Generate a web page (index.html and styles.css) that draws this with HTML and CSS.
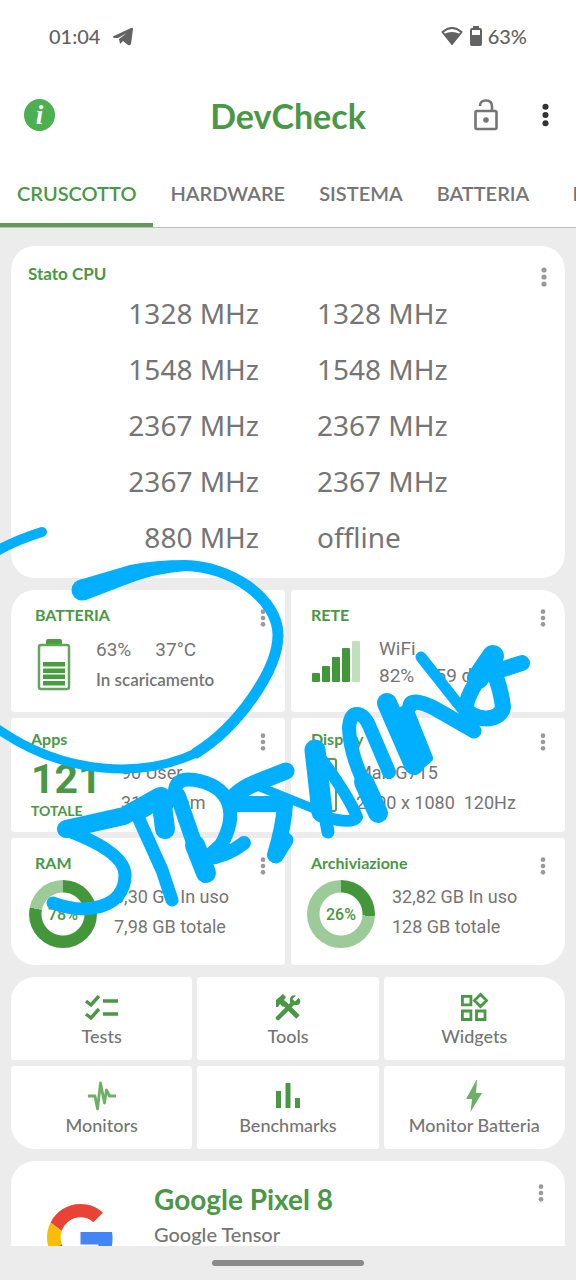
FILE: index.html
```html
<!DOCTYPE html>
<html lang="it">
<head>
  <meta charset="UTF-8" />
  <meta name="viewport" content="width=device-width, initial-scale=1.0"/>
  <title>DevCheck</title>
  <link rel="stylesheet" href="styles.css">
</head>
<body>
  <svg class="defs" aria-hidden="true">
    <symbol id="dots" viewBox="0 0 6 20">
      <circle cx="3" cy="3" r="2.6"/><circle cx="3" cy="10" r="2.6"/><circle cx="3" cy="17" r="2.6"/>
    </symbol>
  </svg>

  <div class="status-bar">
    <span>01:04</span>
    <svg class="telegram" width="20" height="19" viewBox="0 0 20 19"><path d="M1 9 18 1Q20 0 20 2L18 17Q17 19 15 18L10 14 7 17 6 12 14 6 5 11 1 11Q-1 10 1 9Z"/></svg>
    <span class="spacer"></span>
    <svg width="22" height="20" viewBox="0 0 22 20"><path d="M11 18 1.500 6Q11-2 20.500 6Z" fill="none" stroke="#626262" stroke-width="2" stroke-linejoin="round"/><path d="M11 19 3 8Q11 4 19 8Z"/></svg>
    <svg class="batt" width="12" height="20" viewBox="0 0 12 20"><path d="M3 2V0h6v2h1q2 0 2 2v14q0 2-2 2H2q-2 0-2-2V4q0-2 2-2Z"/><path d="M2 4h8v5H2Z" fill="#fff"/></svg>
    <span>63%</span>
  </div>

  <header class="app-bar">
    <button class="info" aria-label="Info">i</button>
    <h1>DevCheck</h1>
    <div class="actions">
      <button class="lock" aria-label="Sblocca">
        <svg width="24" height="32" viewBox="0 0 24 32" fill="none" stroke="#757575" stroke-width="2.6"><rect x="1.5" y="12" width="21" height="18" rx="1.5"/><path d="M6 7Q6 1.500 12 1.500T18 7.500V12"/><circle cx="12" cy="21" r="2.800" fill="#757575" stroke="none"/></svg>
      </button>
      <button class="more" aria-label="Altro"><svg width="7" height="24"><use href="#dots"/></svg></button>
    </div>
  </header>

  <nav class="tabs">
    <a href="#cruscotto" class="active">CRUSCOTTO</a>
    <a href="#hardware">HARDWARE</a>
    <a href="#sistema">SISTEMA</a>
    <a href="#batteria">BATTERIA</a>
    <a href="#rete">RETE</a>
  </nav>

  <main>
    <section class="card cpu">
      <div class="head">
        <h2>Stato CPU</h2>
        <button class="menu" aria-label="Menu CPU"><svg width="6" height="20"><use href="#dots"/></svg></button>
      </div>
      <table>
        <tr><td>1328 MHz</td><td>1328 MHz</td></tr>
        <tr><td>1548 MHz</td><td>1548 MHz</td></tr>
        <tr><td>2367 MHz</td><td>2367 MHz</td></tr>
        <tr><td>2367 MHz</td><td>2367 MHz</td></tr>
        <tr><td>880 MHz</td><td>offline</td></tr>
      </table>
    </section>

    <div class="tiles">
      <section class="tile wide-pad">
        <div class="head">
          <h2>BATTERIA</h2>
          <button class="menu" aria-label="Menu batteria"><svg width="6" height="18"><use href="#dots"/></svg></button>
        </div>
        <div class="body">
          <div class="icon batt-icon">
            <svg width="34" height="52" viewBox="0 0 34 52"><path d="M9 5V2q0-2 2-2h12q2 0 2 2v3Z" fill="#4a9c40"/><rect x="2" y="6" width="30" height="44" rx="2" fill="none" stroke="#64a45c" stroke-width="2.500"/><path d="M6 23h22v4.500H6ZM6 29.500h22V34H6ZM6 35.500h22V40H6ZM6 42h22v4.500H6Z" fill="#4a9c40"/></svg>
          </div>
          <div class="lines">
            <p class="big"><span class="first">63%</span>37°C</p>
            <p class="lato">In scaricamento</p>
          </div>
        </div>
      </section>

      <section class="tile">
        <div class="head">
          <h2>RETE</h2>
          <button class="menu" aria-label="Menu rete"><svg width="6" height="18"><use href="#dots"/></svg></button>
        </div>
        <div class="body">
          <div class="icon net-icon">
            <svg width="50" height="42" viewBox="0 0 50 42" fill="#43963a"><rect x="1" y="32" width="8" height="9" rx="1"/><rect x="11" y="25" width="8" height="16" rx="1"/><rect x="21" y="16" width="8" height="25" rx="1"/><rect x="31" y="7" width="8" height="34" rx="1"/><rect x="41" y="0" width="8" height="41" rx="1" fill="#c0dfbd"/></svg>
          </div>
          <div class="lines tight big">
            <p>WiFi</p>
            <p><span class="first near">82%</span>-59 dBm</p>
          </div>
        </div>
      </section>

      <section class="tile short">
        <div class="head">
          <h2>Apps</h2>
          <button class="menu" aria-label="Menu apps"><svg width="6" height="18"><use href="#dots"/></svg></button>
        </div>
        <div class="body">
          <div class="icon total"><strong>121</strong><span>TOTALE</span></div>
          <div class="lines">
            <p>90 User</p>
            <p>31 System</p>
          </div>
        </div>
      </section>

      <section class="tile short">
        <div class="head">
          <h2>Display</h2>
          <button class="menu" aria-label="Menu display"><svg width="6" height="18"><use href="#dots"/></svg></button>
        </div>
        <div class="body">
          <div class="icon phone-icon">
            <svg width="26" height="54" viewBox="0 0 26 54"><rect x="1" y="1" width="24" height="52" rx="2" fill="none" stroke="#5a9e50" stroke-width="2"/></svg>
          </div>
          <div class="lines">
            <p>Mali-G715</p>
            <p>2400 x 1080&nbsp; 120Hz</p>
          </div>
        </div>
      </section>

      <section class="tile wide-pad ring-tile">
        <div class="head">
          <h2>RAM</h2>
          <button class="menu" aria-label="Menu RAM"><svg width="6" height="18"><use href="#dots"/></svg></button>
        </div>
        <div class="body">
          <div class="ring" style="--value: 78%"><span>78%</span></div>
          <div class="lines">
            <p>6,30 GB In uso</p>
            <p>7,98 GB totale</p>
          </div>
        </div>
      </section>

      <section class="tile ring-tile">
        <div class="head">
          <h2>Archiviazione</h2>
          <button class="menu" aria-label="Menu archiviazione"><svg width="6" height="18"><use href="#dots"/></svg></button>
        </div>
        <div class="body">
          <div class="ring" style="--value: 26%"><span>26%</span></div>
          <div class="lines">
            <p>32,82 GB In uso</p>
            <p>128 GB totale</p>
          </div>
        </div>
      </section>
    </div>

    <div class="shortcuts">
      <button>
        <svg width="34" height="28" viewBox="0 0 34 28" fill="none" stroke="#4a9745" stroke-width="3.400"><path d="M1 8l5 4 8-9M1 21l5 4 8-9M18 8h15M18 21h15"/></svg>
        Tests
      </button>
      <button>
        <svg width="28" height="28" viewBox="0 0 28 28"><g fill="none" stroke="#4a9745"><path d="M4 25 18 11" stroke-width="4.500" stroke-linecap="round"/><path d="M10 10 24 24" stroke-width="5"/><path d="M24.500 5 21 8.500 18.500 6 22 2.500Q17 1 16 6t4 6 6-2-1.500-5Z" fill="#4a9745" stroke="none"/><path d="M2 14V7l7-6 3 3-2 3 3 3-4 4-3-3-2 3Z" fill="#4a9745" stroke="none"/></g></svg>
        Tools
      </button>
      <button>
        <svg width="28" height="30" viewBox="0 0 28 30" fill="none" stroke="#4a9745" stroke-width="2.800"><path d="M2.400 4.400h8.500v8.500H2.400ZM2.400 19h8.500v8.500H2.400ZM16.500 19H25v8.500h-8.500ZM20.500 2.500l6 6-6 6-6-6Z"/></svg>
        Widgets
      </button>
      <button>
        <svg width="28" height="30" viewBox="0 0 28 30" fill="none" stroke="#6caf65" stroke-width="2.800" stroke-linejoin="round"><path d="M0 15h7l2.500 13L12.500 2l4 20 2-13 3 6H28"/></svg>
        Monitors
      </button>
      <button>
        <svg width="24" height="28" viewBox="0 0 24 28" fill="#4a9745"><path d="M0 9h5v17H0ZM9.500 1h5v25h-5ZM19 16h5v10h-5Z"/></svg>
        Benchmarks
      </button>
      <button>
        <svg width="18" height="32" viewBox="0 0 18 32" fill="#6caf65"><path d="M11.500 0 1 19h6L5.500 32 17 13h-6L12 0Z"/></svg>
        Monitor Batteria
      </button>
    </div>

    <section class="card device">
      <svg class="g-logo" width="67" height="67" viewBox="0 0 48 48">
        <path fill="#ea4335" d="M24 9.500c3.540 0 6.710 1.220 9.210 3.600l6.850-6.850C35.900 2.380 30.470 0 24 0 14.620 0 6.510 5.380 2.560 13.220l7.980 6.190C12.430 13.720 17.740 9.500 24 9.500z"/>
        <path fill="#4285f4" d="M46.980 24.550c0-1.570-.15-3.090-.38-4.550H24v9.020h12.940c-.58 2.960-2.260 5.480-4.780 7.180l7.730 6c4.510-4.180 7.090-10.360 7.090-17.650z"/>
        <path fill="#fbbc05" d="M10.530 28.590c-.48-1.450-.76-2.990-.76-4.590s.27-3.140.76-4.590l-7.980-6.190C.920 16.460 0 20.120 0 24c0 3.880.920 7.540 2.560 10.780l7.970-6.190z"/>
        <path fill="#34a853" d="M24 48c6.480 0 11.930-2.130 15.890-5.810l-7.730-6c-2.150 1.450-4.920 2.300-8.160 2.300-6.260 0-11.570-4.220-13.470-9.910l-7.980 6.190C6.510 42.620 14.620 48 24 48z"/>
      </svg>
      <div class="device-text">
        <h3>Google Pixel 8</h3>
        <p>Google Tensor</p>
      </div>
      <button class="menu" aria-label="Menu dispositivo"><svg width="6" height="18"><use href="#dots"/></svg></button>
    </section>
  </main>

  <div class="nav-bar"><span></span></div>

  <!-- freehand marker drawn over the screen -->
  <svg class="marker" viewBox="0 0 576 1280" aria-hidden="true">
    <g fill="none" stroke="#00b0ff" stroke-linecap="round" stroke-linejoin="round">
      <!-- circle round the battery tile -->
      <path d="M-5 552Q16 540 42 532" stroke-width="10"/>
      <circle cx="82" cy="590" r="10.5" fill="#00b0ff" stroke="none"/>
      <path d="M79 580 130 565Q155 560 186 560V571Q155 573 125 585L86 600Z" fill="#00b0ff" stroke="none"/>
      <path d="M185 565.500C230 566 278 598 278 635C278 670 238 727 196 753" stroke-width="11"/>
      <path d="M198 752C145 778 65 777 -5 727" stroke-width="9"/>
      <!-- S -->
      <path d="M158 797 124 816 66 829" stroke-width="18"/>
      <path d="M66 830Q125 852 125 875C125 909 85 915 53 903" stroke-width="13"/>
      <!-- T -->
      <path d="M137 811 161 797 165 829" stroke-width="20"/>
      <path d="M138 817 162 870 172 900" stroke-width="13"/>
      <!-- R -->
      <path d="M178 796 200 860" stroke-width="16"/>
      <path d="M195 845 206 873" stroke-width="20"/>
      <path d="M176 800Q170 774 200 781C232 789 238 815 221 845L207 858Q226 857 244 843" stroke-width="14"/>
      <!-- E -->
      <path d="M286 771 258 782Q238 790 232 800" stroke-width="17"/>
      <path d="M238 804 285 804Q284 825 275 855" stroke-width="16"/>
      <path d="M276 856 286 840" stroke-width="15"/>
      <path d="M255 785 322 812" stroke-width="9"/>
      <!-- A -->
      <path d="M315 750 322 812" stroke-width="21"/>
      <path d="M323 805 328 832" stroke-width="13"/>
      <path d="M322 760Q349 797 357 817Q353 825 325 817" stroke-width="12"/>
      <!-- M -->
      <path d="M378 813 362 778Q350 752 349 728Q350 714 357 714Q365 714 371 730L389 772" stroke-width="14"/>
      <path d="M378 813 364 782" stroke-width="20"/>
      <!-- N -->
      <path d="M387 703 414 765" stroke-width="20"/>
      <path d="M396 716 408 708 428 758 415 769Z" fill="#00b0ff" stroke-width="10"/>
      <path d="M410 706Q411 697 434 708L474 731" stroke-width="15"/>
      <path d="M421 657 474 724" stroke-width="11"/>
      <!-- G -->
      <path d="M493 656 478 678" stroke-width="22"/>
      <path d="M489 664Q466 694 466 708C470 720 500 724 503 707Q501 690 494 672L522 663" stroke-width="16"/>
    </g>
  </svg>
</body>
</html>
```
FILE: styles.css
```css
:root {
  --green: #4a9745;
  --green-light: #9cca98;
  --grey: #757575;
  --bg: #ececec;
  --card-bg: #fff;
  --radius: 24px;
}
* {
  box-sizing: border-box;
}
body {
  display: flex;
  flex-direction: column;
  position: relative;
  height: 100vh;
  margin: 0;
  overflow: hidden;
  background: var(--bg);
  color: var(--grey);
  font-family: Lato, Arial, sans-serif;
}
h1, h2, h3, p {
  margin: 0;
}
button {
  padding: 0;
  border: none;
  background: none;
  color: inherit;
  font-family: inherit;
  cursor: pointer;
}
svg {
  display: block;
  flex: none;
}
.defs {
  position: absolute;
  width: 0;
  height: 0;
}
.status-bar {
  display: flex;
  align-items: center;
  height: 72px;
  padding: 0 49px;
  background: var(--card-bg);
  color: #626262;
  fill: #626262;
  font-size: 20px;
  font-weight: 500;
}
.telegram {
  margin-left: 13px;
}
.spacer {
  flex: 1;
}
.batt {
  margin: 0 6px 0 7px;
}
.app-bar {
  display: grid;
  grid-template-columns: 1fr auto 1fr;
  align-items: center;
  height: 86px;
  padding: 0 24px;
  background: var(--card-bg);
}
.info {
  width: 31px;
  height: 32px;
  border-radius: 50%;
  background: #4caf50;
  color: #fff;
  font: italic bold 27px/30px "Liberation Serif", serif;
}
h1 {
  color: var(--green);
  font-size: 34px;
  font-weight: 700;
}
.actions {
  display: flex;
  justify-content: flex-end;
  align-items: center;
  gap: 41px;
}
.more {
  padding: 0 3px;
  fill: #333;
}
.tabs {
  display: flex;
  flex: none;
  height: 70px;
  overflow: hidden;
  background: var(--card-bg);
  border-bottom: 1px solid #bdbdbd;
}
.tabs a {
  flex: none;
  padding: 0 17px;
  border-bottom: 4px solid transparent;
  color: var(--grey);
  font-size: 20px;
  font-weight: 600;
  line-height: 70px;
  text-decoration: none;
}
.tabs a:last-child {
  min-width: 100px;
  text-align: center;
}
.tabs a.active {
  color: var(--green);
  border-color: #5f9a57;
  border-radius: 4px 4px 0 0;
}
main {
  display: flex;
  flex: 1;
  flex-direction: column;
  gap: 12px;
  min-height: 0;
  padding: 18px 11px 0;
  overflow: hidden;
}
.card {
  flex: none;
  background: var(--card-bg);
  border-radius: var(--radius);
}
.head {
  display: flex;
  justify-content: space-between;
  height: 22px;
}
h2 {
  color: var(--green);
  font-size: 16px;
  font-weight: 700;
  line-height: 22px;
}
.menu {
  display: flex;
  align-items: center;
  justify-content: center;
  width: 24px;
  height: 28px;
  fill: #999;
}
.cpu {
  padding: 17px 9px 13px 17px;
}
.cpu h2 {
  font-size: 17px;
}
.cpu table {
  width: 100%;
  border-collapse: collapse;
}
.cpu td {
  width: 50%;
  height: 56px;
  padding: 0 33px 0 25px;
  font-family: "Noto Sans", "Open Sans", sans-serif;
  font-size: 28px;
  text-align: right;
}
.cpu td + td {
  padding: 0 25px;
  text-align: left;
}
.tiles {
  display: grid;
  flex: none;
  grid-template-columns: 1fr 1fr;
  gap: 6px;
  overflow: hidden;
  border-radius: var(--radius);
}
.tile {
  padding: 14px 10px 17px 20px;
  background: var(--card-bg);
  border-radius: 3px;
}
.wide-pad {
  padding-left: 24px;
}
.short {
  padding-top: 10px;
  padding-bottom: 10px;
}
.body {
  display: flex;
  align-items: center;
  margin-top: 9px;
}
.short .body {
  align-items: flex-start;
  margin-top: 8px;
}
.lines {
  font-family: Roboto, sans-serif;
  font-size: 18px;
  line-height: 30px;
  white-space: nowrap;
}
.big {
  font-size: 19px;
}
.tight {
  line-height: 27px;
}
.lines .lato {
  font-family: Lato, sans-serif;
  font-size: 17px;
  font-weight: 600;
}
.first {
  margin-right: 24px;
}
.near {
  margin-right: 16px;
}
.icon {
  flex: none;
}
.batt-icon {
  width: 61px;
  padding-left: 2px;
}
.net-icon {
  width: 68px;
}
.phone-icon {
  width: 45px;
}
.total {
  display: flex;
  flex-direction: column;
  width: 90px;
  color: var(--green);
  font-family: Roboto, sans-serif;
}
.total strong {
  font-size: 41px;
  line-height: 42px;
}
.total span {
  font-family: Lato, sans-serif;
  font-size: 14px;
  font-weight: 700;
  line-height: 22px;
}
.ring-tile {
  padding-bottom: 17px;
}
.ring-tile .body {
  gap: 17px;
  margin-top: 6px;
  margin-left: -4px;
}
.wide-pad.ring-tile .body {
  margin-left: -6px;
}
.ring-tile .lines {
  padding-bottom: 4px;
}
.ring {
  display: flex;
  flex: none;
  align-items: center;
  justify-content: center;
  width: 68px;
  height: 68px;
  border-radius: 50%;
  background: radial-gradient(circle, #fff 21px, transparent 22px), conic-gradient(#43963a var(--value), var(--green-light) 0);
  color: var(--green);
  font-family: Roboto, sans-serif;
  font-size: 16px;
  font-weight: 500;
}
.shortcuts {
  display: grid;
  flex: none;
  grid-template-columns: repeat(3, 1fr);
  gap: 6px 5px;
  overflow: hidden;
  border-radius: var(--radius);
}
.shortcuts button {
  display: flex;
  flex-direction: column;
  align-items: center;
  justify-content: flex-start;
  height: 83px;
  padding-top: 14px;
  background: var(--card-bg);
  border-radius: 3px;
  font-size: 18px;
  font-weight: 500;
  line-height: 24px;
}
.shortcuts svg {
  height: 32px;
  margin-bottom: 1px;
}
.device {
  display: flex;
  align-items: flex-start;
  padding: 18px 12px 20px 36px;
}
.g-logo {
  margin-top: 25px;
}
.device-text {
  flex: 1;
  padding-left: 40px;
}
h3 {
  color: var(--green);
  font-size: 28px;
  font-weight: 700;
  line-height: 40px;
}
.device-text p {
  font-size: 20px;
  font-weight: 500;
  line-height: 30px;
}
.nav-bar {
  display: flex;
  flex: none;
  align-items: center;
  justify-content: center;
  height: 34px;
}
.nav-bar span {
  width: 152px;
  height: 6px;
  border-radius: 3px;
  background: #8a8a8a;
}
.marker {
  position: absolute;
  top: 0;
  left: 0;
  width: 100%;
  pointer-events: none;
}
```
